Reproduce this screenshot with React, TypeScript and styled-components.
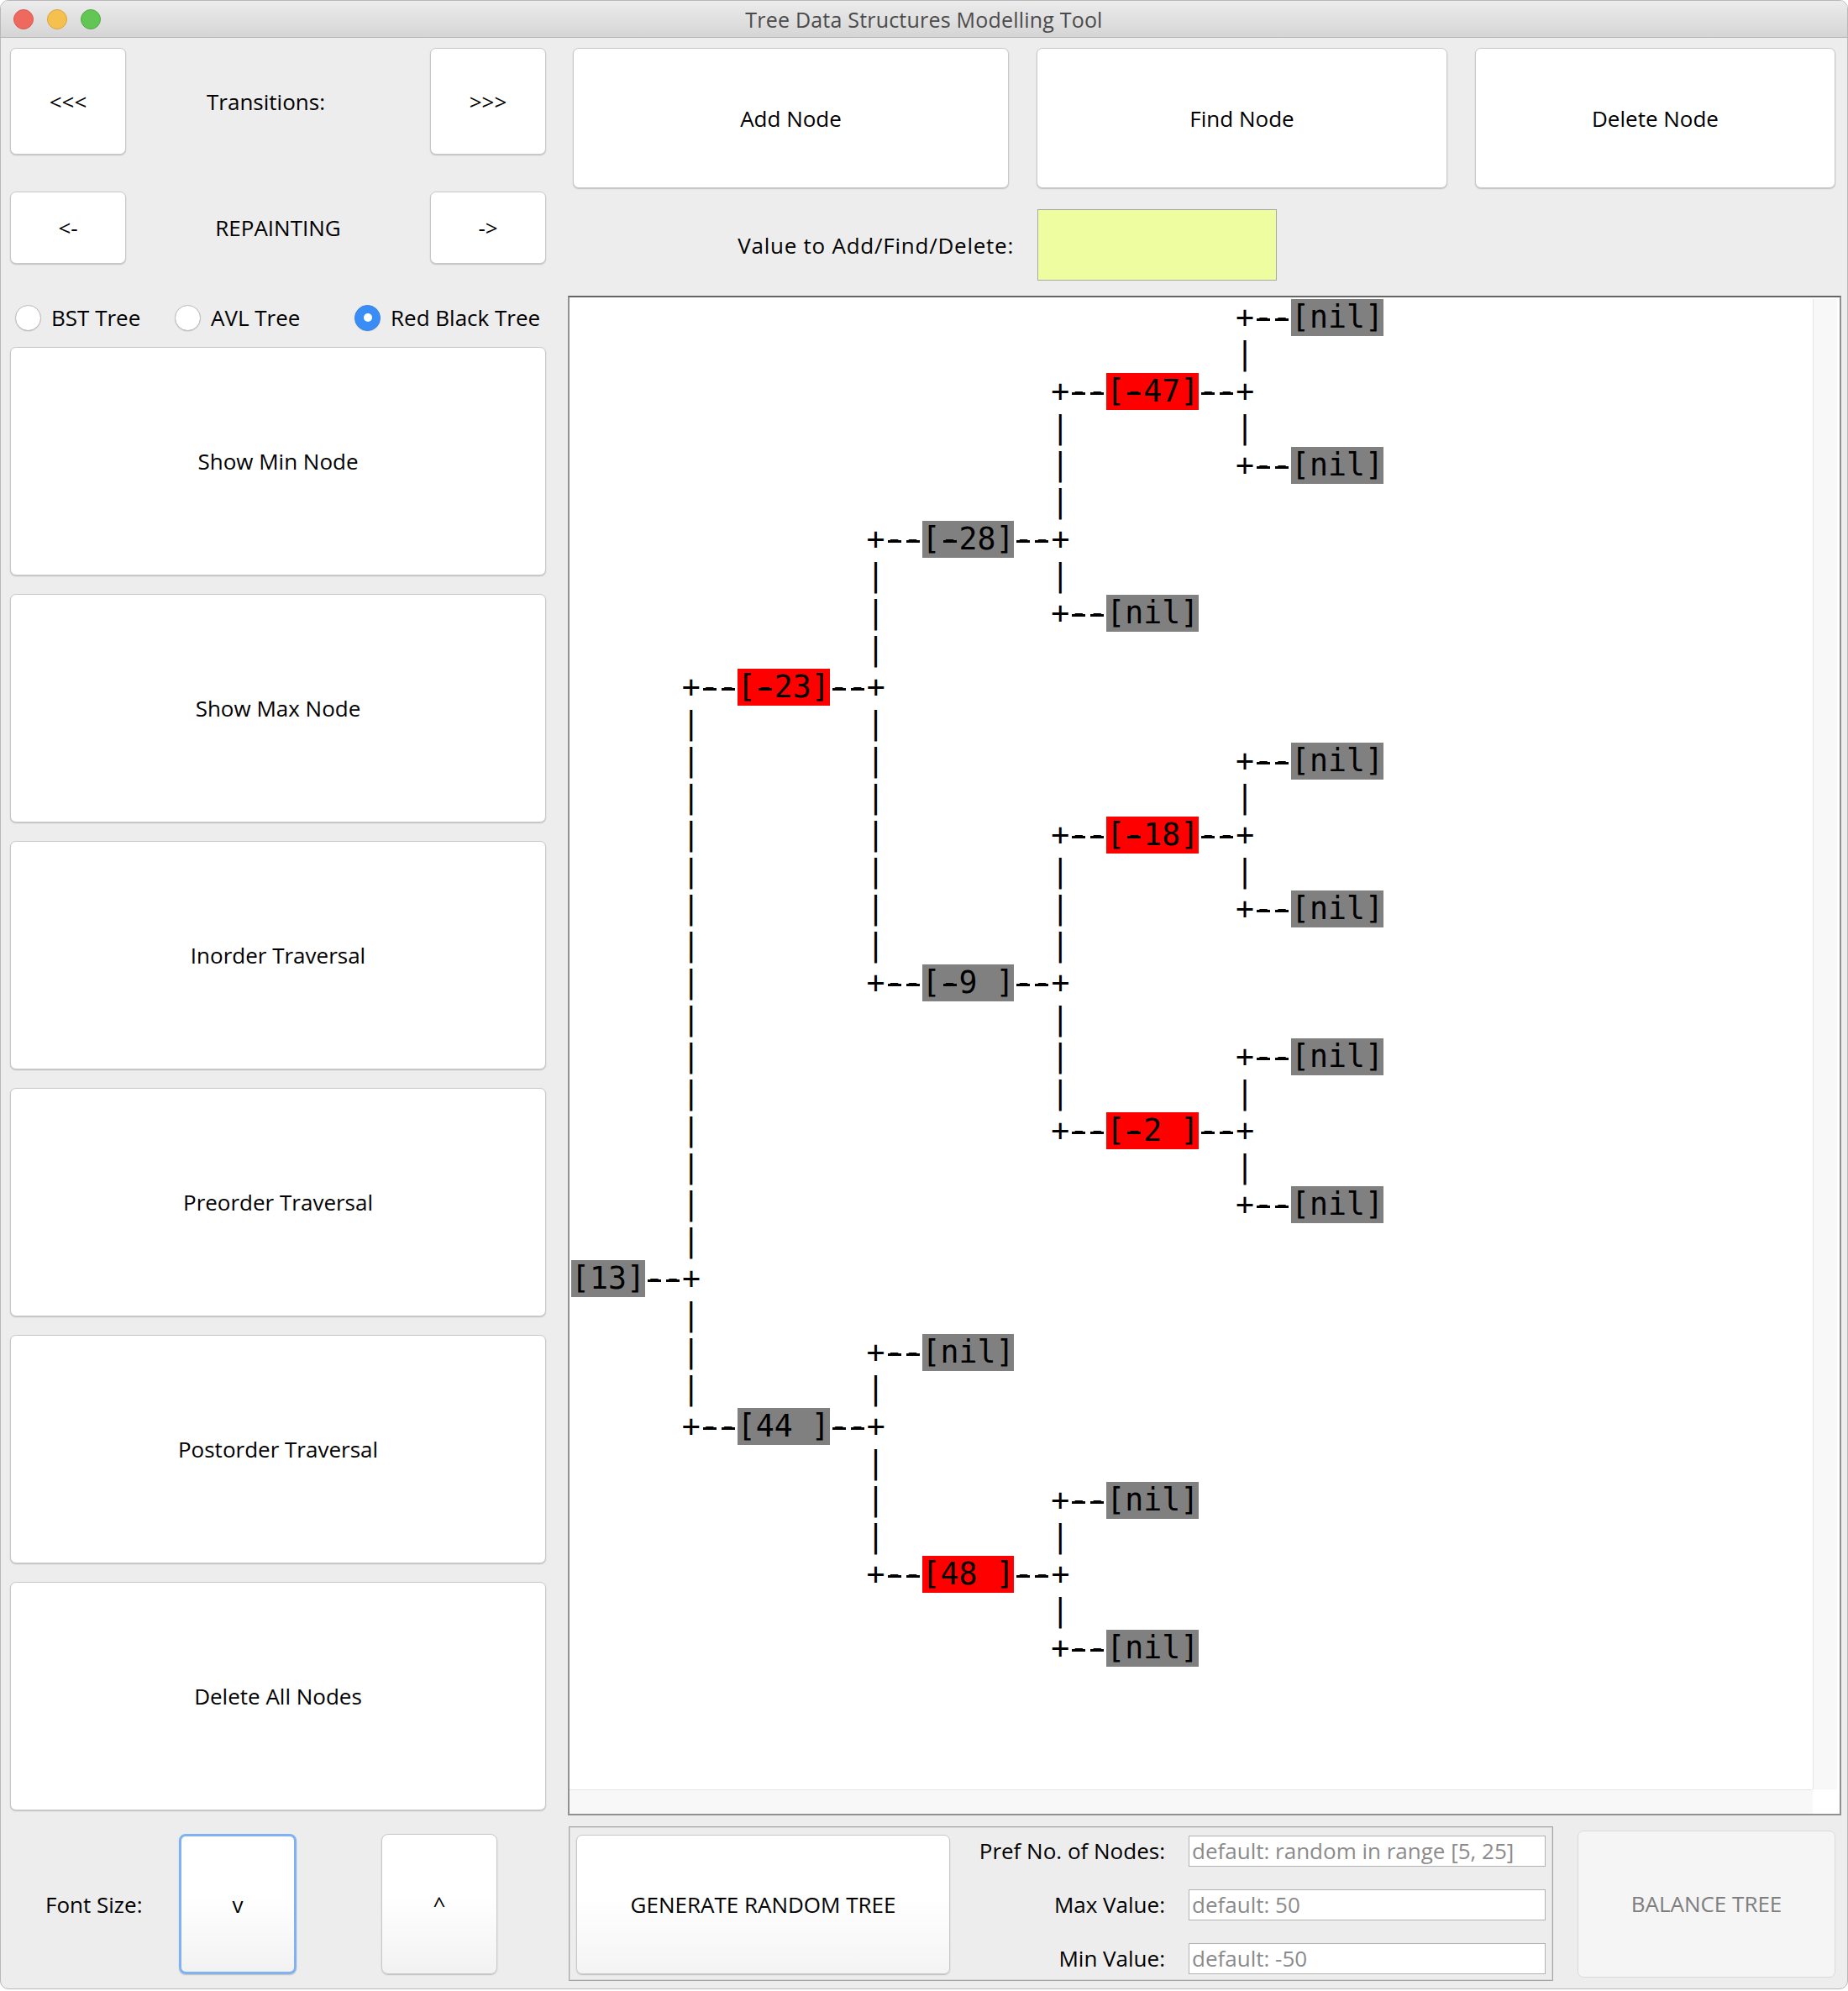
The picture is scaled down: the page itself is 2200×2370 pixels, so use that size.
import React from 'react';
import styled, { createGlobalStyle } from 'styled-components';

const UI_FONT = `"Open Sans", "Liberation Sans", sans-serif`;

const GlobalStyle = createGlobalStyle`
  html, body { margin: 0; padding: 0; background: #ffffff; }
  body { font-family: ${UI_FONT}; }
  *, *::before, *::after { box-sizing: border-box; }
`;

const Window = styled.div`
  width: 2200px;
  height: 2368px;
  background: #ededed;
  border: 1px solid #b8b8b8;
  border-radius: 10px;
  overflow: hidden;
  display: flex;
  flex-direction: column;
`;

const TitleBar = styled.header`
  flex: none;
  height: 44px;
  display: grid;
  grid-template-columns: 1fr auto 1fr;
  align-items: center;
  background: linear-gradient(#ececec, #d5d5d5);
  border-bottom: 1px solid #b4b4b4;
`;

const Lights = styled.div`
  display: flex;
  gap: 16px;
  padding-left: 15px;
`;

const Light = styled.span<{ $fill: string; $edge: string }>`
  width: 24px;
  height: 24px;
  border-radius: 50%;
  background: ${(p) => p.$fill};
  border: 1px solid ${(p) => p.$edge};
`;

const Title = styled.div`
  font-size: 25px;
  color: #4b4b4b;
  letter-spacing: 0.2px;
`;

const Body = styled.div`
  flex: 1;
  display: grid;
  grid-template-columns: 638px 1516px;
  column-gap: 26px;
  padding-left: 11px;
`;

const Column = styled.div`
  display: flex;
  flex-direction: column;
`;

const NavRow = styled.div<{ $top: number; $h: number }>`
  margin-top: ${(p) => p.$top}px;
  height: ${(p) => p.$h}px;
  display: grid;
  grid-template-columns: 138px 1fr 138px;
`;

const Button = styled.button`
  font-family: ${UI_FONT};
  font-size: 26px;
  color: #000;
  background: #ffffff;
  border: 1px solid #c8c8c8;
  border-radius: 7px;
  box-shadow: 0 1px 1.5px rgba(0, 0, 0, 0.2);
  padding: 0;
  margin: 0;
  display: flex;
  align-items: center;
  justify-content: center;
`;

const CenterLabel = styled.div<{ $shift?: number }>`
  display: flex;
  align-items: center;
  justify-content: center;
  font-size: 26px;
  color: #000;
  padding-right: ${(p) => p.$shift ?? 0}px;
`;

const RadioRow = styled.div`
  margin-top: 46px;
  height: 32px;
  display: grid;
  grid-template-columns: 190px 214px auto;
  padding-left: 6px;
  align-items: center;
`;

const RadioItem = styled.label`
  display: flex;
  align-items: center;
  gap: 12px;
  font-size: 26px;
  color: #000;
`;

const RadioCircle = styled.span<{ $checked?: boolean }>`
  width: 31px;
  height: 31px;
  border-radius: 50%;
  display: flex;
  align-items: center;
  justify-content: center;
  background: ${(p) => (p.$checked ? '#3a8df7' : '#ffffff')};
  border: 1px solid ${(p) => (p.$checked ? '#3583ea' : '#bcbcbc')};
  box-shadow: 0 0.5px 1px rgba(0, 0, 0, 0.15);
`;

const RadioDot = styled.span`
  width: 10px;
  height: 10px;
  border-radius: 50%;
  background: #ffffff;
`;

const ActionList = styled.div`
  margin-top: 21px;
  display: flex;
  flex-direction: column;
  gap: 22px;
`;

const BigButton = styled(Button)`
  height: 272px;
`;

const FontRow = styled.div`
  margin-top: 28px;
  height: 167px;
  display: flex;
  align-items: center;
`;

const FontLabel = styled.span`
  margin-left: 42px;
  width: 159px;
  font-size: 26px;
  color: #000;
`;

const FontButton = styled(Button)<{ $w: number; $focused?: boolean; $gap?: number }>`
  width: ${(p) => p.$w}px;
  height: 167px;
  margin-left: ${(p) => p.$gap ?? 0}px;
  background: linear-gradient(#ffffff 45%, #f2f2f2);
  border: ${(p) => (p.$focused ? '3px solid #80b1f1' : '1px solid #c8c8c8')};
  border-radius: 8px;
`;

const TopButtons = styled.div`
  margin-top: 12px;
  height: 167px;
  padding-left: 6px;
  display: flex;
  gap: 33px;
`;

const TopButton = styled(Button)<{ $w: number }>`
  width: ${(p) => p.$w}px;
  height: 167px;
`;

const ValueRow = styled.div`
  margin-top: 25px;
  height: 85px;
  display: grid;
  grid-template-columns: 531px 285px;
  column-gap: 28px;
  align-items: center;
`;

const ValueLabel = styled.span`
  font-size: 26px;
  letter-spacing: 0.75px;
  color: #000;
  text-align: right;
`;

const ValueBox = styled.div`
  width: 285px;
  height: 85px;
  background: #edfda0;
  border: 1px solid #a9a9a9;
`;

const TreePanel = styled.div`
  margin-top: 18px;
  height: 1809px;
  background: #ffffff;
  border: 2px solid #919191;
  border-top-color: #646464;
  display: grid;
  grid-template-columns: 1fr 32px;
  grid-template-rows: 1fr 29px;
`;

const TreeView = styled.div`
  overflow: hidden;
  padding: 2px 0 0 2px;
  font-family: "DejaVu Sans Mono", "Liberation Mono", monospace;
  font-size: 36.5px;
  line-height: 44px;
  color: #000;
  white-space: pre;
`;

const TreeLine = styled.div`
  height: 44px;
`;

const NodeLabel = styled.span<{ $red: boolean }>`
  display: inline-block;
  height: 44px;
  vertical-align: top;
  background: ${(p) => (p.$red ? '#ff0000' : '#808080')};
`;

/* the app's monospace font draws long dashes: lengthen the hyphen with a bar behind it */
const Dash = styled.span`
  display: inline-block;
  height: 44px;
  vertical-align: top;
  background: linear-gradient(#000, #000) no-repeat 3px 23px / 16px 3px;
`;

const VTrack = styled.div`
  margin: 2px 3px 0 0;
  background: #f8f8f8;
  border-left: 1px solid #e5e5e5;
`;

const HTrack = styled.div`
  background: #f8f8f8;
  border-top: 1px solid #e5e5e5;
`;

const Corner = styled.div`
  background: #ffffff;
`;

const BottomRow = styled.div`
  margin-top: 13px;
  height: 184px;
  display: flex;
  align-items: center;
`;

const GroupBox = styled.div`
  margin-left: 1px;
  width: 1172px;
  height: 184px;
  border: 1px solid #a5a5a5;
  box-shadow: inset 0 0 0 1px #d9d9d9;
  padding: 9px 0 0 8px;
  display: flex;
  align-items: flex-start;
`;

const GenerateButton = styled(Button)`
  width: 445px;
  height: 166px;
  background: linear-gradient(#ffffff 45%, #f4f4f4);
`;

const FieldGrid = styled.div`
  margin-top: 1px;
  display: grid;
  grid-template-columns: 256px 425px;
  grid-auto-rows: 37px;
  column-gap: 28px;
  row-gap: 27px;
`;

const FieldLabel = styled.span`
  font-size: 26px;
  line-height: 37px;
  color: #000;
  text-align: right;
`;

const Field = styled.div`
  height: 37px;
  background: #ffffff;
  border: 1px solid #b3b3b3;
  padding-left: 3px;
  font-size: 26px;
  line-height: 34px;
  color: #8b8b8b;
  white-space: nowrap;
  overflow: hidden;
`;

const BalanceButton = styled(Button)`
  margin-left: 29px;
  width: 307px;
  height: 175px;
  background: #f5f5f5;
  border: 1px solid #dadada;
  box-shadow: none;
  color: #7e7e7e;
`;

/* ---------- tree data + ASCII layout ---------- */

type TNode = { label: string; red?: boolean; left?: TNode; right?: TNode };
const nil = (): TNode => ({ label: '[nil]' });
const leafParent = (label: string, red: boolean): TNode => ({ label, red, left: nil(), right: nil() });

const TREE: TNode = {
  label: '[13]',
  left: {
    label: '[-23]',
    red: true,
    left: { label: '[-28]', left: leafParent('[-47]', true), right: nil() },
    right: { label: '[-9 ]', left: leafParent('[-18]', true), right: leafParent('[-2 ]', true) },
  },
  right: { label: '[44 ]', left: nil(), right: leafParent('[48 ]', true) },
};

const heightOf = (n: TNode): number =>
  n.left && n.right ? heightOf(n.left) + 3 + heightOf(n.right) : 1;

type Seg = { text: string; kind: 'plain' | 'red' | 'gray' };

function buildLines(root: TNode): Seg[][] {
  const rows = heightOf(root);
  const cols = 60;
  const g: string[][] = Array.from({ length: rows }, () => Array(cols).fill(' '));
  const m: ('plain' | 'red' | 'gray')[][] = Array.from({ length: rows }, () => Array(cols).fill('plain'));
  const put = (r: number, c: number, s: string) => {
    for (let i = 0; i < s.length; i++) g[r][c + i] = s[i];
  };
  const place = (n: TNode, top: number, col: number, prefix: boolean): number => {
    const labelCol = prefix ? col + 3 : col;
    const inner = !!(n.left && n.right);
    const line = inner ? top + heightOf(n.left!) + 1 : top;
    if (prefix) put(line, col, '+--');
    put(line, labelCol, n.label);
    for (let i = 0; i < n.label.length; i++) m[line][labelCol + i] = n.red ? 'red' : 'gray';
    if (inner) {
      const end = labelCol + n.label.length;
      put(line, end, '--+');
      const k = end + 2;
      const a = place(n.left!, top, k, true);
      const b = place(n.right!, line + 2, k, true);
      for (let r = a + 1; r < b; r++) if (r !== line) g[r][k] = '|';
    }
    return line;
  };
  place(root, 0, 0, false);

  return g.map((row, r) => {
    let last = row.length - 1;
    while (last >= 0 && row[last] === ' ') last--;
    const segs: Seg[] = [];
    for (let c = 0; c <= last; c++) {
      const kind = m[r][c];
      const prev = segs[segs.length - 1];
      if (prev && prev.kind === kind) prev.text += row[c];
      else segs.push({ text: row[c], kind });
    }
    return segs;
  });
}

const TREE_LINES = buildLines(TREE);

const withDashes = (text: string) =>
  text.split(/(-)/).map((part, i) =>
    part === '-' ? <Dash key={i}>-</Dash> : <React.Fragment key={i}>{part}</React.Fragment>
  );

const ACTIONS = ['Show Min Node', 'Show Max Node', 'Inorder Traversal', 'Preorder Traversal', 'Postorder Traversal', 'Delete All Nodes'];

export default function App() {
  return (
    <>
      <GlobalStyle />
      <Window>
        <TitleBar>
          <Lights>
            <Light $fill="#ee6a5f" $edge="#d65a4f" />
            <Light $fill="#f6c04f" $edge="#d9a441" />
            <Light $fill="#62c655" $edge="#52a840" />
          </Lights>
          <Title>Tree Data Structures Modelling Tool</Title>
          <div />
        </TitleBar>
        <Body>
          <Column>
            <NavRow $top={12} $h={127}>
              <Button>&lt;&lt;&lt;</Button>
              <CenterLabel $shift={29}>Transitions:</CenterLabel>
              <Button>&gt;&gt;&gt;</Button>
            </NavRow>
            <NavRow $top={44} $h={86}>
              <Button>&lt;-</Button>
              <CenterLabel>REPAINTING</CenterLabel>
              <Button>-&gt;</Button>
            </NavRow>
            <RadioRow>
              <RadioItem>
                <RadioCircle />
                BST Tree
              </RadioItem>
              <RadioItem>
                <RadioCircle />
                AVL Tree
              </RadioItem>
              <RadioItem>
                <RadioCircle $checked>
                  <RadioDot />
                </RadioCircle>
                Red Black Tree
              </RadioItem>
            </RadioRow>
            <ActionList>
              {ACTIONS.map((a) => (
                <BigButton key={a}>{a}</BigButton>
              ))}
            </ActionList>
            <FontRow>
              <FontLabel>Font Size:</FontLabel>
              <FontButton $w={140} $focused>v</FontButton>
              <FontButton $w={138} $gap={101}>^</FontButton>
            </FontRow>
          </Column>
          <Column>
            <TopButtons>
              <TopButton $w={519}>Add Node</TopButton>
              <TopButton $w={489}>Find Node</TopButton>
              <TopButton $w={429}>Delete Node</TopButton>
            </TopButtons>
            <ValueRow>
              <ValueLabel>Value to Add/Find/Delete:</ValueLabel>
              <ValueBox />
            </ValueRow>
            <TreePanel>
              <TreeView>
                {TREE_LINES.map((segs, i) => (
                  <TreeLine key={i}>
                    {segs.map((s, j) =>
                      s.kind === 'plain' ? (
                        <React.Fragment key={j}>{withDashes(s.text)}</React.Fragment>
                      ) : (
                        <NodeLabel key={j} $red={s.kind === 'red'}>
                          {withDashes(s.text)}
                        </NodeLabel>
                      )
                    )}
                  </TreeLine>
                ))}
              </TreeView>
              <VTrack />
              <HTrack />
              <Corner />
            </TreePanel>
            <BottomRow>
              <GroupBox>
                <GenerateButton>GENERATE RANDOM TREE</GenerateButton>
                <FieldGrid>
                  <FieldLabel>Pref No. of Nodes:</FieldLabel>
                  <Field>default: random in range [5, 25]</Field>
                  <FieldLabel>Max Value:</FieldLabel>
                  <Field>default: 50</Field>
                  <FieldLabel>Min Value:</FieldLabel>
                  <Field>default: -50</Field>
                </FieldGrid>
              </GroupBox>
              <BalanceButton>BALANCE TREE</BalanceButton>
            </BottomRow>
          </Column>
        </Body>
      </Window>
    </>
  );
}
